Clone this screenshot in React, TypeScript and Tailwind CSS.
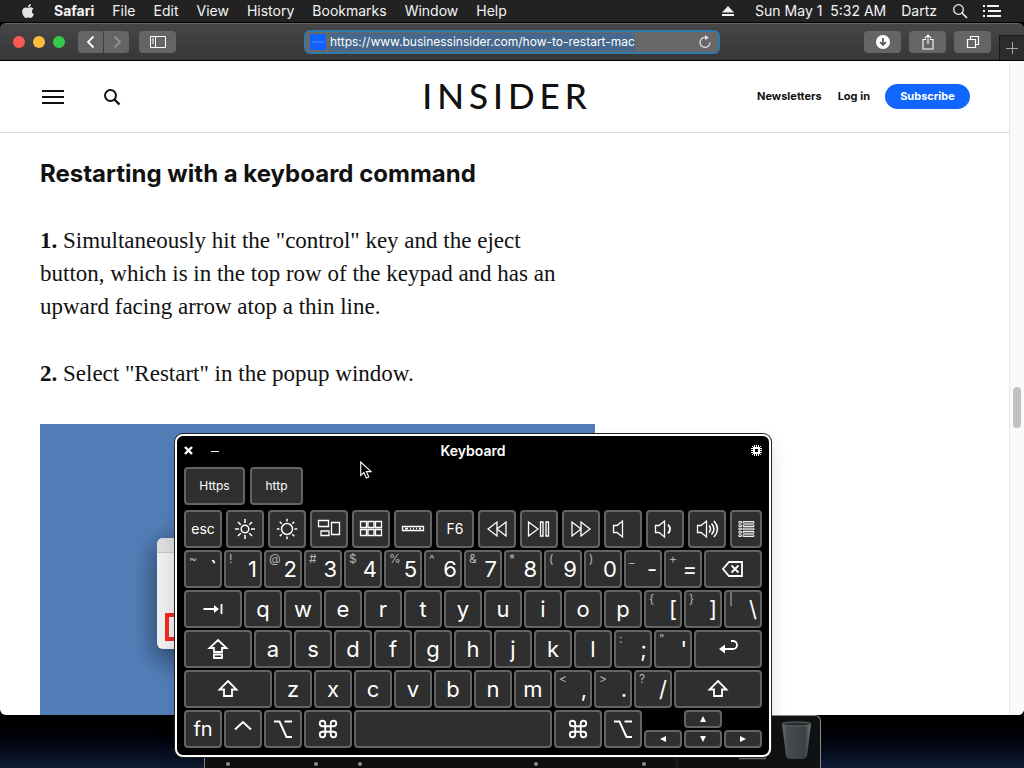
import type { ReactNode } from "react";
import { FaApple } from "react-icons/fa";

const menus = ["File", "Edit", "View", "History", "Bookmarks", "Window", "Help"];

function Icon({ children, className = "size-6", box = "0 0 24 24", width = 1.3 }: { children: ReactNode; className?: string; box?: string; width?: number }) {
  return (
    <svg viewBox={box} className={className} fill="none" stroke="currentColor" strokeWidth={width} aria-hidden="true">
      {children}
    </svg>
  );
}

function MenuBar() {
  return (
    <nav aria-label="Menu bar" className="flex h-[22px] shrink-0 items-center justify-between bg-[#222222] pr-[23px] pl-5 text-sm text-[#f4f4f4]">
      <div className="flex items-center gap-[18px]">
        <button aria-label="Apple menu"><FaApple className="size-4 text-[#e4e4e4]" /></button>
        <button className="font-bold">Safari</button>
        {menus.map((m) => <button key={m}>{m}</button>)}
      </div>
      <div className="flex items-center gap-[15px]">
        <button aria-label="Eject" className="mr-1.5">
          <svg viewBox="0 0 12 12" className="size-3" fill="currentColor"><path d="M6 1 12 7.5H0zM0 9h12v2H0z" /></svg>
        </button>
        <time className="whitespace-pre">Sun May 1  5:32 AM</time>
        <button>Dartz</button>
        <button aria-label="Spotlight"><Icon className="size-4" box="0 0 16 16"><circle cx="6.5" cy="6.5" r="4.8" /><path d="m10 10 5 5" strokeWidth="1.6" /></Icon></button>
        <button aria-label="Notification Center"><Icon className="h-3 w-[18px]" box="0 0 18 12" width={2}><path d="M0 1h2M4 1h12M0 6h2M5 6h13M0 11h2M4 11h14" /></Icon></button>
      </div>
    </nav>
  );
}

const toolButton = "flex h-[22px] w-[37px] items-center justify-center rounded bg-[#656565] text-white";

function Toolbar() {
  return (
    <div className="grid h-[38px] shrink-0 grid-cols-[1fr_416px_1fr] items-center rounded-t-md border-t border-b border-t-[#666666] border-b-black bg-linear-to-b from-[#464646] to-[#373737]">
      <div className="flex items-center pl-[13px]">
        <div className="flex gap-2">
          <button aria-label="Close" className="size-3 rounded-full bg-[#fc5753]" />
          <button aria-label="Minimize" className="size-3 rounded-full bg-[#fdbc40]" />
          <button aria-label="Zoom" className="size-3 rounded-full bg-[#34c84a]" />
        </div>
        <div className="ml-[13px] flex gap-px">
          <button aria-label="Back" className="flex h-[22px] w-[25px] items-center justify-center rounded-l bg-[#656565] text-white"><Icon className="size-4" box="0 0 16 16" width={1.8}><path d="m10.5 2.5-5.500 5.500 5.500 5.500" /></Icon></button>
          <button aria-label="Forward" className="flex h-[22px] w-[25px] items-center justify-center rounded-r bg-[#656565] text-[#929292]"><Icon className="size-4" box="0 0 16 16" width={1.8}><path d="m5.500 2.500 5.500 5.500-5.500 5.500" /></Icon></button>
        </div>
        <button aria-label="Show sidebar" className={`ml-2.5 ${toolButton}`}>
          <Icon className="h-3 w-4" box="0 0 16 12" width={1}><path d="M.5.5h15v11H.5zM5.500.5v11M2 3h2M2 5h2M2 7h2" /></Icon>
        </button>
      </div>
      <div className="flex h-6 items-center rounded-md border-2 border-[#2e78aa] bg-[#686868] pr-1.5 pl-1">
        <span className="mr-1 flex size-4 items-center justify-center bg-[#0f62fe]"><Icon className="h-1 w-3" box="0 0 12 4" width={1}><path d="M0 2h12" stroke="#69a0ff" strokeDasharray="1.500 .5" /></Icon></span>
        <input aria-label="Address" readOnly value="https://www.businessinsider.com/how-to-restart-mac" className="field-sizing-content h-[18px] bg-[#46688c] text-[12px] text-white outline-none" />
        <button aria-label="Reload" className="ml-auto text-[#dddddd]"><Icon className="size-[14px]" box="0 0 14 14"><path d="M9.500 3.100A5 5 0 1 0 12 7.500" /><path d="M7 0v5l4-2.200z" fill="currentColor" stroke="none" /></Icon></button>
      </div>
      <div className="flex h-full items-center justify-end gap-2">
        <button aria-label="Downloads" className={toolButton}><svg viewBox="0 0 16 16" className="size-4"><circle cx="8" cy="8" r="7" fill="white" /><path d="M8 4v7M5 8l3 3 3-3" fill="none" stroke="#555" strokeWidth="1.700" /></svg></button>
        <button aria-label="Share" className={toolButton}><Icon className="size-4" box="0 0 16 16" width={1.1}><path d="M6 5.500H3v9.500h10V5.500h-3M8 10V1M5 4l3-3 3 3" /></Icon></button>
        <button aria-label="Tab overview" className={toolButton}><Icon className="size-4" box="0 0 16 16" width={1.2}><path d="M2.500 5.500h8v8h-8zM5.500 5V2.500h8v8H11" /></Icon></button>
        <button aria-label="New tab" className="flex h-[25px] w-[25px] items-center justify-center self-end border-t border-l border-[#181818] bg-[#2c2c2c] text-[#a5a5a5]"><Icon className="size-3" box="0 0 12 12" width={1}><path d="M0 6.500h12M6.500 0v12" /></Icon></button>
      </div>
    </div>
  );
}

function SiteHeader() {
  return (
    <header className="grid h-[72px] shrink-0 grid-cols-[1fr_auto_1fr] items-center border-b border-[#dcdcdc] px-[39px] text-[#111111]">
      <div className="flex items-center gap-9">
        <button aria-label="Menu"><Icon className="h-4 w-7" box="0 0 28 16" width={2}><path d="M3 2h22M3 8h22M3 14h22" /></Icon></button>
        <button aria-label="Search"><Icon className="size-[18px]" box="0 0 18 18" width={2}><circle cx="7.500" cy="7.500" r="5.500" /><path d="m11.500 11.500 5 5" strokeWidth="2.400" /></Icon></button>
      </div>
      <a href="#home" aria-label="Insider" className="flex gap-[5px] pb-1 font-['Lato',sans-serif] text-[35px] leading-[40px] font-medium">
        {"INSIDER".split("").map((c, i) => <span key={i}>{c}</span>)}
      </a>
      <div className="flex items-center justify-end text-[11px] font-bold">
        <a href="#newsletters">Newsletters</a>
        <a href="#login" className="ml-4">Log in</a>
        <a href="#subscribe" className="ml-[15px] flex h-[25px] w-[85px] items-center justify-center rounded-full bg-[#1066fe] text-white">Subscribe</a>
      </div>
    </header>
  );
}

function Article() {
  return (
    <main className="flex min-h-0 flex-1 flex-col gap-[34px] overflow-hidden px-10 pt-6 text-[#111111]">
      <h2 className="text-[24px] leading-[33px] font-bold">Restarting with a keyboard command</h2>
      <p className="max-w-[540px] font-['Liberation_Serif',serif] text-[23px] leading-[33px]">
        <b>1.</b> Simultaneously hit the "control" key and the eject button, which is in the top row of the keypad and has an upward facing arrow atop a thin line.
      </p>
      <p className="max-w-[540px] font-['Liberation_Serif',serif] text-[23px] leading-[33px]">
        <b>2.</b> Select "Restart" in the popup window.
      </p>
      <figure className="min-h-0 max-w-[555px] flex-1 overflow-hidden bg-[#527eb8] pt-[114px] pl-[117px]">
        <div className="h-[111px] w-[320px] overflow-hidden rounded-md bg-[#efefef] shadow-[0_8px_24px_4px_rgba(0,0,0,0.4)]">
          <div className="h-[15px] border-b border-[#c4c4c4] bg-[#dddddd]" />
          <div className="mt-[60px] ml-2 h-[28px] w-[120px] border-4 border-[#f1291c]" />
        </div>
      </figure>
    </main>
  );
}

type Spec = { id: string; label?: ReactNode; top?: string; w?: string; text?: string };

const keyBase = "flex items-center rounded-[4px] border-2 border-[#646464] bg-[#2f2f2f] text-white";

function Key({ id, label, top, w = "w-[38px]", text = "text-[22px]" }: Spec) {
  if (top) {
    return (
      <button className={`${keyBase} ${w} h-[38px] justify-between pr-[3px] pl-[3px]`}>
        <span className="self-start text-[12px] leading-[14px] text-[#b4b4b4]">{top}</span>
        <span className="text-[22px] leading-none">{id}</span>
      </button>
    );
  }
  return <button aria-label={id} className={`${keyBase} ${w} ${text} h-[38px] justify-center leading-none`}>{label ?? id}</button>;
}

const plain = (s: string): Spec[] => s.split("").map((c) => ({ id: c }));
const pairs = (s: string): Spec[] => s.split(" ").map((p) => ({ top: p[0], id: p[1] }));

function rays(inner: number, outer: number) {
  return [0, 45, 90, 135, 180, 225, 270, 315].map((a) => {
    const r = (a * Math.PI) / 180;
    return <line key={a} x1={12 + inner * Math.cos(r)} y1={12 + inner * Math.sin(r)} x2={12 + outer * Math.cos(r)} y2={12 + outer * Math.sin(r)} />;
  });
}

const speaker = <path d="M2.500 8.500h3.500l5.500-4.500v16L6 15.500H2.500z" />;
const shift = <Icon width={1.8}><path d="m12 4 8.500 8.500H16V19H8v-6.500H3.500z" /></Icon>;
const command = <Icon className="size-[22px]" width={2}><path d="M15 6v12a3 3 0 1 0 3-3H6a3 3 0 1 0 3 3V6a3 3 0 1 0-3 3h12a3 3 0 1 0-3-3" /></Icon>;
const option = <Icon width={2}><path d="M3 4.500h5.500l7 15.500H21M13.500 4.500H21" /></Icon>;

const fnKeys: Spec[] = [
  { id: "esc", text: "text-[14px]" },
  { id: "Brightness down", label: <Icon width={1.5}><circle cx="12" cy="12" r="3.800" />{rays(6, 10)}</Icon> },
  { id: "Brightness up", label: <Icon width={1.5}><circle cx="12" cy="12" r="5.500" />{rays(7.5, 10.2)}</Icon> },
  { id: "Mission Control", label: <Icon><path d="M1.500 3.500h10v6h-10zM14.500 5.500h8v12h-8zM4 14h8v4.500H4z" /></Icon> },
  { id: "Launchpad", label: <Icon><path d="M1.500 4.500h6v6h-6zM9 4.500h6v6H9zM16.500 4.500h6v6h-6zM1.500 12.500h6v6h-6zM9 12.500h6v6H9zM16.500 12.500h6v6h-6z" /></Icon> },
  { id: "Touch Bar", label: <Icon><path d="M1.500 9.500h21v4h-21zM4 11.500h3M9 11.500h1M12 11.500h1M15 11.500h1M18 11.500h2" /></Icon> },
  { id: "F6", text: "text-[14px]" },
  { id: "Rewind", label: <Icon><path d="M12 5v14l-9-7zM21 5v14l-9-7z" /></Icon> },
  { id: "Play or pause", label: <Icon><path d="M1.500 5v14l9.500-7zM13.500 5h2.500v14h-2.500zM19 5h2.500v14H19z" /></Icon> },
  { id: "Fast forward", label: <Icon><path d="M3 5v14l9-7zM12 5v14l9-7z" /></Icon> },
  { id: "Mute", label: <Icon>{speaker}</Icon> },
  { id: "Volume down", label: <Icon>{speaker}<path d="M15 7.500q4 4.500 0 9" strokeWidth="1.800" /></Icon> },
  { id: "Volume up", label: <Icon>{speaker}<path d="M14 8.500q3 3.500 0 7M16.500 6.500q5 5.500 0 11M19 4q7 8 0 16" strokeWidth="1.500" /></Icon> },
  { id: "List", w: "w-[32px]", label: <Icon className="h-[22px] w-5" width={1.1}><path d="M3.500 3h3v2h-3zM8.500 3h13v2h-13zM3.500 7h3v2h-3zM8.500 7h13v2h-13zM3.500 11h3v2h-3zM8.500 11h13v2h-13zM3.500 15h3v2h-3zM8.500 15h13v2h-13zM3.500 19h3v2h-3zM8.500 19h13v2h-13z" /></Icon> },
];

const rows: Spec[][] = [
  [...pairs("~` !1 @2 #3 $4 %5 ^6 &7 *8 (9 )0 _- +="), { id: "Delete", w: "w-[58px]", label: <Icon width={1.8}><path d="M8 5h13v14H8l-6-7zM10.500 8.500l7 7M17.500 8.500l-7 7" /></Icon> }],
  [{ id: "Tab", w: "w-[58px]", label: <Icon width={1.8}><path d="M2.500 12h14M20.500 7v10" /><path d="m13 8 5 4-5 4z" fill="currentColor" stroke="none" /></Icon> }, ...plain("qwertyuiop"), ...pairs("{[ }] |\\")],
  [{ id: "Caps Lock", w: "w-[68px]", label: <Icon width={1.8}><path d="m12 3 8.500 8H16v4H8v-4H3.500zM8 17.500h8V21H8z" /></Icon> }, ...plain("asdfghjkl"), ...pairs(":; \"'"), { id: "Return", w: "w-[68px]", label: <Icon width={1.8}><path d="M8 12h9a4 4 0 0 0 0-8h-2" /><path d="m3 12 6-4.500v9z" fill="currentColor" stroke="none" /></Icon> }],
  [{ id: "Left Shift", w: "w-[88px]", label: shift }, ...plain("zxcvbnm"), ...pairs("<, >. ?/"), { id: "Right Shift", w: "w-[88px]", label: shift }],
];

const bottomRow: Spec[] = [
  { id: "fn", text: "text-[20px]" },
  { id: "Control", label: <Icon width={2}><path d="m4 12.500 8-7.500 8 7.500" /></Icon> },
  { id: "Left Option", label: option },
  { id: "Left Command", w: "w-[48px]", label: command },
  { id: "Space", w: "w-[198px]", label: "" },
  { id: "Right Command", w: "w-[48px]", label: command },
  { id: "Right Option", label: option },
];

function Arrow({ name, d }: { name: string; d: string }) {
  return (
    <button aria-label={name} className={`${keyBase} h-[18px] w-[38px] justify-center`}>
      <svg viewBox="0 0 8 8" className="size-2" fill="currentColor"><path d={d} /></svg>
    </button>
  );
}

function KeyboardWindow() {
  return (
    <section aria-label="Keyboard" className="absolute top-[434px] left-[175px] rounded-lg border-2 border-white bg-black px-[7px] pb-[7px] text-white shadow-[0_0_0_1px_#222222,0_8px_18px_rgba(0,0,0,0.15)]">
      <div className="mb-[2px] grid h-[29px] grid-cols-[1fr_auto_1fr] items-center">
        <div className="flex items-center gap-[18px]">
          <button aria-label="Close keyboard"><Icon className="size-[9px]" box="0 0 9 9" width={2.4}><path d="m1 1 7 7M8 1 1 8" /></Icon></button>
          <button aria-label="Minimize keyboard"><Icon className="size-2" box="0 0 8 8" width={1}><path d="M0 4.500h8" /></Icon></button>
        </div>
        <h1 className="text-[14px] leading-5 font-semibold">Keyboard</h1>
        <button aria-label="Settings" className="justify-self-end">
          <svg viewBox="0 0 11 11" className="size-[11px]" fill="currentColor" fillRule="evenodd" aria-hidden="true">
            <path d="M2 2h7v7H2zM4 4v3h3V4zM3 0h1v2H3zM5 0h1v2H5zM7 0h1v2H7zM3 9h1v2H3zM5 9h1v2H5zM7 9h1v2H7zM0 3h2v1H0zM0 5h2v1H0zM0 7h2v1H0zM9 3h2v1H9zM9 5h2v1H9zM9 7h2v1H9zM1 1h1v1H1zM9 1h1v1H9zM1 9h1v1H1zM9 9h1v1H9z" />
          </svg>
        </button>
      </div>
      <div className="flex gap-[5px]">
        <Key id="Https" w="w-[61px]" text="text-[12px]" />
        <Key id="http" w="w-[53px]" text="text-[12px]" />
      </div>
      <div className="mt-[5px] flex flex-col gap-[2px]">
        <div className="flex gap-1">{fnKeys.map((k) => <Key key={k.id} {...k} />)}</div>
        {rows.map((row, i) => <div key={i} className="flex gap-[2px]">{row.map((k) => <Key key={k.id} {...k} />)}</div>)}
        <div className="flex gap-[2px]">
          {bottomRow.map((k) => <Key key={k.id} {...k} />)}
          <div className="flex items-end gap-[2px]">
            <Arrow name="Left" d="M7 1v6L1 4z" />
            <div className="flex flex-col gap-[2px]">
              <Arrow name="Up" d="M1 7h6L4 1z" />
              <Arrow name="Down" d="M1 1h6L4 7z" />
            </div>
            <Arrow name="Right" d="M1 1v6l6-3z" />
          </div>
        </div>
      </div>
    </section>
  );
}

function Dock() {
  return (
    <aside aria-label="Dock" className="absolute bottom-0 left-[204px] h-[53px] w-[617px] rounded-tr-md border-t border-r border-l border-[#8a8a8a] bg-[#101112]">
      <svg viewBox="0 0 615 52" className="h-[52px] w-full" aria-hidden="true">
        <defs>
          <linearGradient id="bin" x1="0" x2="1"><stop offset="0" stopColor="#6b6f70" /><stop offset=".2" stopColor="#454a4c" /><stop offset=".8" stopColor="#3d4143" /><stop offset="1" stopColor="#77797a" /></linearGradient>
        </defs>
        {[23, 111, 155, 331, 439].map((x) => <circle key={x} cx={x} cy="48" r="2" fill="#999999" />)}
        <path d="M534 42.500h27" stroke="#777777" strokeWidth="1.500" />
        <path d="M472 42v9" stroke="#333333" />
        <path d="M577 8q14-4 29 0l-4 32q-1 3-5 3h-11q-4 0-5-3z" fill="url(#bin)" />
        <ellipse cx="591.500" cy="8" rx="14.500" ry="2" fill="#292c2d" stroke="#626668" />
      </svg>
    </aside>
  );
}

export default function App() {
  return (
    <div className="relative flex h-screen flex-col overflow-hidden bg-linear-to-b from-black from-93% to-[#101c35] font-['Inter',sans-serif]">
      <MenuBar />
      <div className="mt-px mb-[53px] flex min-h-0 flex-1 flex-col overflow-hidden rounded-b-md">
        <Toolbar />
        <div className="flex min-h-0 flex-1 bg-white">
          <div className="flex min-w-0 flex-1 flex-col">
            <SiteHeader />
            <Article />
          </div>
          <div className="w-[15px] border-l border-[#e6e6e6] bg-[#fafafa] px-[3px] pt-[326px]">
            <div className="h-[41px] w-2 rounded-full bg-[#c1c1c1]" />
          </div>
        </div>
      </div>
      <Dock />
      <KeyboardWindow />
      <svg viewBox="0 0 12 18" className="absolute top-[461px] left-[360px] h-[18px] w-3" aria-hidden="true">
        <path d="M.7 1v13.500l3.200-3 2.400 5.500 2.500-1-2.400-5.400H11z" fill="black" stroke="white" strokeWidth="1.100" />
      </svg>
    </div>
  );
}
